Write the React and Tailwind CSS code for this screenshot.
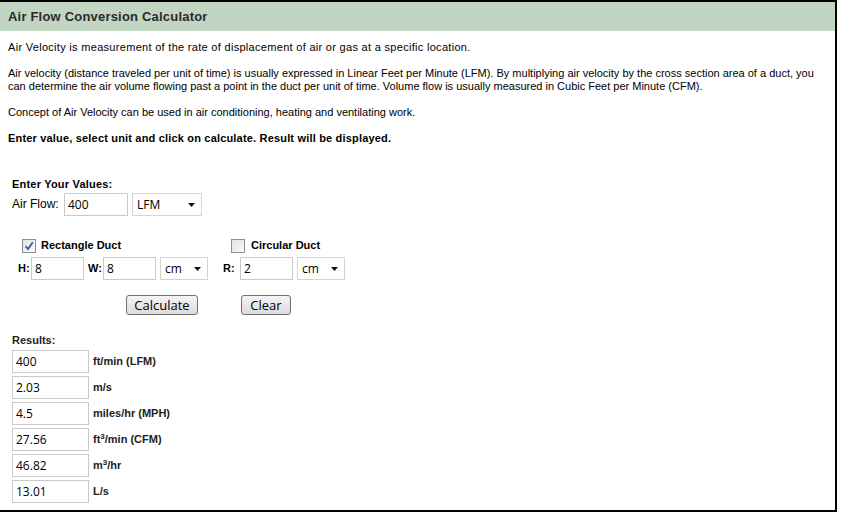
import React from 'react';

const sans = { fontFamily: '"Liberation Sans", Arial, sans-serif' };

const Field = ({ value, w = 'w-[53px]' }) => (
  <input
    readOnly
    value={value}
    className={`${w} h-[23px] border border-[#c9c9c9] bg-white pl-[3px] text-[12px] text-black outline-none`}
    style={{ fontFamily: '"Open Sans", sans-serif' }}
  />
);

const Select = ({ label, w = 'w-[48px]' }) => (
  <div
    className={`${w} h-[23px] border border-[#d4d4d4] bg-white flex items-center justify-between pl-[4px] pr-[6px] text-[12px] text-black`}
    style={{ fontFamily: '"Open Sans", sans-serif' }}
  >
    <span>{label}</span>
    <svg width="7" height="4" viewBox="0 0 7 4">
      <path d="M0 0h7L3.5 4z" fill="#111" />
    </svg>
  </div>
);

const Checkbox = ({ checked }) => (
  <div className="w-[14px] h-[14px] border border-[#8e8e8e] bg-gradient-to-br from-[#e2e2e2] to-[#fafafa] flex items-center justify-center">
    {checked && (
      <svg width="10" height="10" viewBox="0 0 10 10">
        <path d="M1.5 5.2 L4 8 L8.8 1.2" stroke="#3d5aa3" strokeWidth="1.8" fill="none" />
      </svg>
    )}
  </div>
);

const Button = ({ children, w }) => (
  <button
    className={`${w} h-[20px] border border-[#707070] rounded-[3px] bg-gradient-to-b from-[#f4f4f4] to-[#dcdcdc] text-[13px] text-black leading-none`}
    style={{ fontFamily: '"Open Sans", sans-serif' }}
  >
    {children}
  </button>
);

const results = [
  ['400', <>ft/min (LFM)</>],
  ['2.03', <>m/s</>],
  ['4.5', <>miles/hr (MPH)</>],
  ['27.56', <>ft<sup className="text-[8px]">3</sup>/min (CFM)</>],
  ['46.82', <>m<sup className="text-[8px]">3</sup>/hr</>],
  ['13.01', <>L/s</>],
];

export default function App() {
  return (
    <div className="bg-white w-[841px] h-[514px]" style={sans}>
      <div className="w-[837px] h-[512px] border-t-2 border-r-2 border-b-2 border-black">
        {/* header */}
        <div className="h-[29px] bg-[#c2d5c2] pl-2 flex items-center text-[13px] tracking-[0.2px] font-bold text-[#2a2a2a]">
          Air Flow Conversion Calculator
        </div>

        {/* intro */}
        <div className="px-2 pt-[10px] text-[11px] leading-[13px] text-black space-y-[13px]">
          <p className="tracking-[0.3px]">Air Velocity is measurement of the rate of displacement of air or gas at a specific location.</p>
          <p>
            Air velocity (distance traveled per unit of time) is usually expressed in Linear Feet per Minute (LFM). By multiplying air velocity by the cross section area of a duct, you can determine the air volume flowing past a point in the duct per unit of time. Volume flow is usually measured in Cubic Feet per Minute (CFM).
          </p>
          <p>Concept of Air Velocity can be used in air conditioning, heating and ventilating work.</p>
          <p className="font-bold tracking-[0.18px]">Enter value, select unit and click on calculate. Result will be displayed.</p>
        </div>

        {/* form */}
        <div className="pl-3 pt-[33px] text-[11px] leading-[13px] text-black">
          <div className="font-bold tracking-[0.2px]">Enter Your Values:</div>
          <div className="flex items-center mt-[2px]">
            <span className="w-[52px] text-[12px]">Air Flow:</span>
            <Field value="400" w="w-[64px]" />
            <div className="ml-[4px]">
              <Select label="LFM" w="w-[70px]" />
            </div>
          </div>

          <div className="flex pl-[6px] mt-[22px]">
            <div className="w-[205px]">
              <div className="flex items-center gap-[5px] ml-[4px] h-[15px]">
                <Checkbox checked />
                <span className="font-bold">Rectangle Duct</span>
              </div>
              <div className="flex items-center mt-[4px]">
                <span className="w-[13px] font-bold">H:</span>
                <Field value="8" />
                <span className="w-[15px] ml-[4px] font-bold">W:</span>
                <Field value="8" />
                <div className="ml-[4px]">
                  <Select label="cm" />
                </div>
              </div>
            </div>
            <div>
              <div className="flex items-center gap-[6px] ml-[8px] h-[15px]">
                <Checkbox />
                <span className="font-bold">Circular Duct</span>
              </div>
              <div className="flex items-center mt-[4px]">
                <span className="w-[17px] font-bold">R:</span>
                <Field value="2" />
                <div className="ml-[4px]">
                  <Select label="cm" />
                </div>
              </div>
            </div>
          </div>

          <div className="flex mt-[15px] ml-[114px]">
            <Button w="w-[72px]">Calculate</Button>
            <div className="ml-[43px]">
              <Button w="w-[50px]">Clear</Button>
            </div>
          </div>

          <div className="font-bold text-[#222] mt-[19px]">Results:</div>
          <div className="mt-[3px] flex flex-col gap-[3px]">
            {results.map(([v, label], i) => (
              <div key={i} className="flex items-center">
                <Field value={v} w="w-[77px]" />
                <span className="ml-[4px] font-bold text-[#222]">{label}</span>
              </div>
            ))}
          </div>
        </div>
      </div>
    </div>
  );
}
